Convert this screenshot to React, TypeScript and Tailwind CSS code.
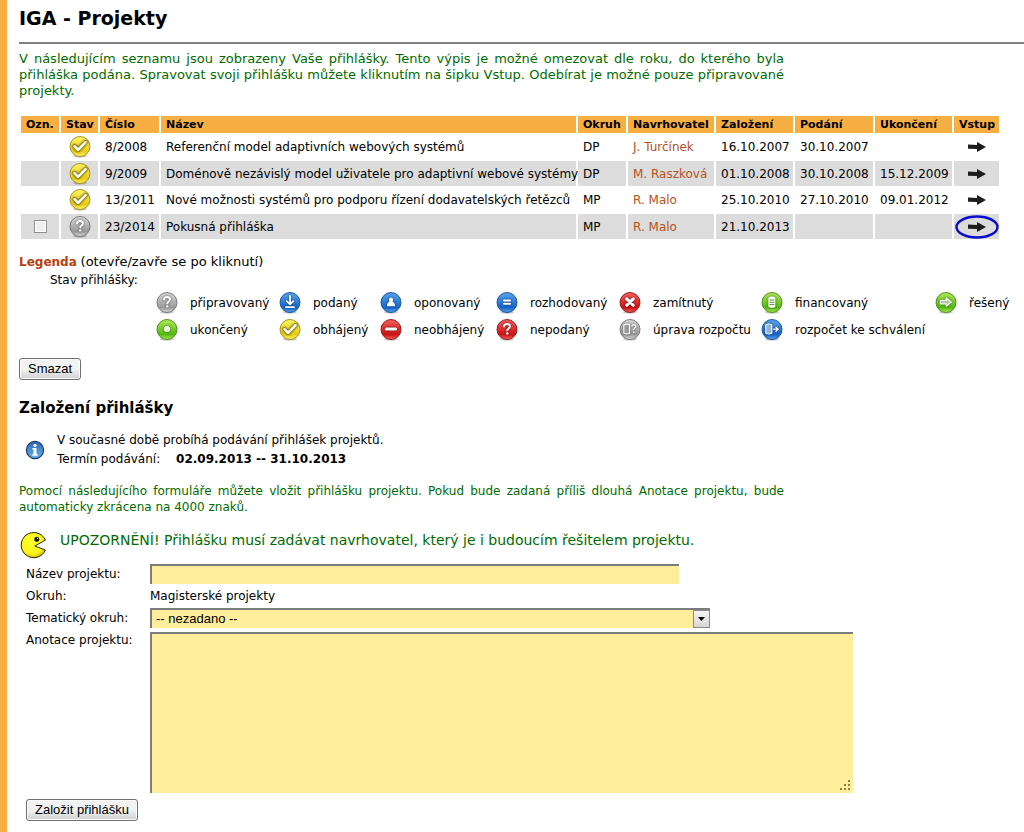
import { useId } from "react";
import type { ReactNode } from "react";

type Status =
  | "pripravovany"
  | "podany"
  | "oponovany"
  | "rozhodovany"
  | "zamitnuty"
  | "financovany"
  | "reseny"
  | "ukonceny"
  | "obhajeny"
  | "neobhajeny"
  | "nepodany"
  | "uprava"
  | "schvaleni";

type Tone = "gray" | "blue" | "red" | "green" | "yellow";

interface Project {
  number: string;
  title: string;
  status: Status;
  area: string;
  author: string;
  created: string;
  submitted?: string;
  finished?: string;
  selectable?: boolean;
}

const projects: Project[] = [
  {
    number: "8/2008",
    title: "Referenční model adaptivních webových systémů",
    status: "obhajeny",
    area: "DP",
    author: "J. Turčínek",
    created: "16.10.2007",
    submitted: "30.10.2007",
  },
  {
    number: "9/2009",
    title: "Doménově nezávislý model uživatele pro adaptivní webové systémy",
    status: "obhajeny",
    area: "DP",
    author: "M. Raszková",
    created: "01.10.2008",
    submitted: "30.10.2008",
    finished: "15.12.2009",
  },
  {
    number: "13/2011",
    title: "Nové možnosti systémů pro podporu řízení dodavatelských řetězců",
    status: "obhajeny",
    area: "MP",
    author: "R. Malo",
    created: "25.10.2010",
    submitted: "27.10.2010",
    finished: "09.01.2012",
  },
  {
    number: "23/2014",
    title: "Pokusná přihláška",
    status: "pripravovany",
    area: "MP",
    author: "R. Malo",
    created: "21.10.2013",
    selectable: true,
  },
];

const legend: { status: Status; label: string }[] = [
  { status: "pripravovany", label: "připravovaný" },
  { status: "podany", label: "podaný" },
  { status: "oponovany", label: "oponovaný" },
  { status: "rozhodovany", label: "rozhodovaný" },
  { status: "zamitnuty", label: "zamítnutý" },
  { status: "financovany", label: "financovaný" },
  { status: "reseny", label: "řešený" },
  { status: "ukonceny", label: "ukončený" },
  { status: "obhajeny", label: "obhájený" },
  { status: "neobhajeny", label: "neobhájený" },
  { status: "nepodany", label: "nepodaný" },
  { status: "uprava", label: "úprava rozpočtu" },
  { status: "schvaleni", label: "rozpočet ke schválení" },
];

const tones: Record<Tone, [string, string, string]> = {
  gray: ["#dadada", "#989898", "#6e6e6e"],
  blue: ["#5aa4ee", "#1565c8", "#124c94"],
  red: ["#f4605c", "#cc1214", "#8e0e10"],
  green: ["#aeea54", "#52b814", "#3f8a10"],
  yellow: ["#fdf566", "#e6cc14", "#a18a12"],
};

const question = (
  <>
    <path d="M9 8.6c0-1.7 1.4-2.6 3-2.6s3 .9 3 2.5c0 2-2.7 2-2.7 3.9" fill="none" strokeWidth="1.9" />
    <circle cx="12.3" cy="15.4" r="1.2" stroke="none" />
  </>
);

const glyphs: Record<Status, { tone: Tone; shape: ReactNode }> = {
  pripravovany: { tone: "gray", shape: question },
  nepodany: { tone: "red", shape: question },
  podany: {
    tone: "blue",
    shape: <path d="M12 5v8M8.8 10.2 12 13.4l3.2-3.2M8 16.2h8" fill="none" strokeWidth="1.8" />,
  },
  oponovany: {
    tone: "blue",
    shape: <path d="M12 6.4a2.3 2.3 0 0 1 1.4 4c1.8.7 2.6 2.4 2.6 4.8H8c0-2.4.8-4.1 2.6-4.8a2.3 2.3 0 0 1 1.4-4z" stroke="none" />,
  },
  rozhodovany: {
    tone: "blue",
    shape: <path d="M9 9.4h6M9 12.8h6" fill="none" strokeWidth="2" />,
  },
  zamitnuty: {
    tone: "red",
    shape: <path d="m8.8 7.9 6.4 6.4m0-6.4-6.4 6.4" fill="none" strokeWidth="3" />,
  },
  financovany: {
    tone: "green",
    shape: (
      <>
        <path d="M9 6.5c1.6-.9 4.4-.9 6 0v9.3c-1.6.9-4.4.9-6 0z" strokeWidth=".8" />
        <path d="M10 9h4M10 11.3h4M10 13.6h4" stroke="#4d9a18" strokeWidth="1" />
      </>
    ),
  },
  reseny: {
    tone: "green",
    shape: <path d="M6.4 9.4h5.8V7l5.2 4.1-5.2 4.1v-2.4H6.4z" fill="#ffffff99" strokeWidth="1.2" />,
  },
  ukonceny: {
    tone: "green",
    shape: <circle cx="12" cy="11" r="2.7" fill="#e4f6d0" strokeWidth="1" />,
  },
  obhajeny: {
    tone: "yellow",
    shape: (
      <>
        <path d="m6.5 11.2 3.5 3.6 7.6-7.6" fill="none" stroke="#9c8b1c" strokeWidth="4" />
        <path d="m6.5 11.2 3.5 3.6 7.6-7.6" fill="none" strokeWidth="2.4" />
      </>
    ),
  },
  neobhajeny: {
    tone: "red",
    shape: <path d="M7.4 11.1h9.2" fill="none" strokeWidth="3" />,
  },
  uprava: {
    tone: "gray",
    shape: (
      <>
        <path d="M5.8 6.8c1.6-.8 4.2-.8 5.8 0v8.4c-1.6.8-4.2.8-5.8 0z" fill="#9a9a9a" strokeWidth="1.1" />
        <path d="M14 8.2c0-2 3.6-2 3.6.2 0 1.6-1.8 1.4-1.8 3.2" fill="none" strokeWidth="1.3" />
        <circle cx="15.8" cy="14.2" r=".8" stroke="none" />
      </>
    ),
  },
  schvaleni: {
    tone: "blue",
    shape: (
      <>
        <path d="M5.8 6.8c1.6-.8 4.4-.8 6 0v8.4c-1.6.8-4.4.8-6 0z" fill="#8fb4d8" strokeWidth="1.1" />
        <path d="M13.6 11.2h4.4M16 9.2l2.2 2-2.2 2" fill="none" strokeWidth="1.3" />
      </>
    ),
  },
};

function StatusIcon({ status }: { status: Status }) {
  const id = useId();
  const { tone, shape } = glyphs[status];
  const [light, base, edge] = tones[tone];
  return (
    <svg viewBox="0 0 24 24" className="size-6 shrink-0" aria-hidden="true">
      <defs>
        <linearGradient id={id} x1="0" y1="0" x2="0" y2="1">
          <stop offset="0" stopColor={light} />
          <stop offset=".75" stopColor={base} />
          <stop offset="1" stopColor={light} />
        </linearGradient>
      </defs>
      <ellipse cx="12" cy="21.2" rx="7" ry="1.6" fill="#00000038" />
      <circle cx="12" cy="11.5" r="10" fill={`url(#${id})`} stroke={edge} strokeWidth=".9" />
      <g
        className="drop-shadow-[0_0_1px_#000000a0]"
        fill="#fff"
        stroke="#fff"
        strokeLinecap="round"
        strokeLinejoin="round"
      >
        {shape}
      </g>
    </svg>
  );
}

function InfoIcon() {
  return (
    <svg viewBox="0 0 20 20" className="size-5 shrink-0" aria-hidden="true">
      <defs>
        <linearGradient id="info-fill" x1="0" y1="0" x2="0" y2="1">
          <stop offset="0" stopColor="#2a62b4" />
          <stop offset="1" stopColor="#6ab8f2" />
        </linearGradient>
      </defs>
      <circle cx="10" cy="10" r="8.6" fill="url(#info-fill)" stroke="#1c3a66" strokeWidth="1.2" />
      <circle cx="10" cy="5.3" r="1.6" fill="#fff" />
      <path d="M7.4 8h4.1v6.2h1.2v1.5H7.3v-1.5h1.2V9.6H7.4z" fill="#fff" />
    </svg>
  );
}

function PacmanIcon() {
  return (
    <svg viewBox="0 0 28 28" className="size-7 shrink-0" aria-hidden="true">
      <defs>
        <radialGradient id="pacman-fill" cx=".45" cy=".4" r=".65">
          <stop offset="0" stopColor="#ffff30" />
          <stop offset=".7" stopColor="#fcf414" />
          <stop offset="1" stopColor="#c4b400" />
        </radialGradient>
      </defs>
      <path
        d="M25.4 9.2A12.6 12.6 0 1 0 25.4 19L14.8 15z"
        fill="url(#pacman-fill)"
        stroke="#2a2600"
        strokeWidth="1"
        strokeLinejoin="round"
      />
      <circle cx="16.8" cy="8.2" r="2.5" fill="#111" />
      <circle cx="17.6" cy="7.4" r=".7" fill="#fff" />
    </svg>
  );
}

function ArrowIcon() {
  return (
    <svg viewBox="0 0 18 12" className="h-3 w-[18px]" aria-hidden="true">
      <path d="M0 3.5 9 4V1l9 5-9 5V8L0 7.8z" fill="#1c1c1c" />
    </svg>
  );
}

function ProjectTable() {
  return (
    <table className="table-fixed w-[982px] border-separate border-spacing-[2px] text-left leading-4">
      <colgroup>
        <col className="w-[38px]" />
        <col className="w-[37px]" />
        <col className="w-[59px]" />
        <col />
        <col className="w-[48px]" />
        <col className="w-[86px]" />
        <col className="w-[77px]" />
        <col className="w-[78px]" />
        <col className="w-[77px]" />
        <col className="w-[45px]" />
      </colgroup>
      <thead>
        <tr className="h-[17px] bg-[#f7af44] text-[11px] whitespace-nowrap [&>th]:px-[5px] [&>th]:py-0">
          <th>Ozn.</th>
          <th>Stav</th>
          <th>Číslo</th>
          <th>Název</th>
          <th>Okruh</th>
          <th>Navrhovatel</th>
          <th>Založení</th>
          <th>Podání</th>
          <th>Ukončení</th>
          <th>Vstup</th>
        </tr>
      </thead>
      <tbody>
        {projects.map((p) => (
          <tr
            key={p.number}
            className="h-6 whitespace-nowrap even:h-[25px] even:bg-[#dcdcdc] [&>td]:px-[5px] [&>td]:py-0"
          >
            <td>
              {p.selectable && (
                <input
                  type="checkbox"
                  aria-label={p.number}
                  className="mx-auto block size-[13px] appearance-none border border-[#8e8f8f] bg-[#f0f0f0] shadow-[inset_0_0_0_1px_#fff]"
                />
              )}
            </td>
            <td>
              <div className="flex justify-center">
                <StatusIcon status={p.status} />
              </div>
            </td>
            <td>{p.number}</td>
            <td>{p.title}</td>
            <td>{p.area}</td>
            <td>
              <a href="#" className="text-[#b8501c]">
                {p.author}
              </a>
            </td>
            <td>{p.created}</td>
            <td>{p.submitted}</td>
            <td>{p.finished}</td>
            <td>
              <a href="#" aria-label="Vstup" className="relative flex justify-center">
                <ArrowIcon />
                {p.selectable && (
                  <svg viewBox="0 0 44 24" className="absolute -inset-x-1 -top-1.5 h-6 w-11" aria-hidden="true">
                    <ellipse cx="22" cy="12" rx="20.5" ry="10.5" fill="none" stroke="#0c0cd0" strokeWidth="2.4" />
                  </svg>
                )}
              </a>
            </td>
          </tr>
        ))}
      </tbody>
    </table>
  );
}

function Legend() {
  return (
    <section className="mt-[11px]">
      <p className="leading-5">
        <a href="#" className="font-bold text-[#b8400c]">
          Legenda
        </a>{" "}
        <span className="text-[13px]">(otevře/zavře se po kliknutí)</span>
      </p>
      <p className="pl-[31px] leading-4">Stav přihlášky:</p>
      <ul className="mt-[3px] ml-[136px] grid grid-cols-[123px_101px_116px_123px_142px_174px_80px] gap-y-[3px]">
        {legend.map((item) => (
          <li key={item.status} className="flex items-center gap-[11px] whitespace-nowrap">
            <StatusIcon status={item.status} />
            {item.label}
          </li>
        ))}
      </ul>
    </section>
  );
}

const buttonClass =
  "h-[22px] rounded-[3px] border border-[#707070] bg-linear-to-b from-[#f2f2f2] from-50% to-[#d0d0d0] px-2 font-['Liberation_Sans',Arial,sans-serif] text-[13px] leading-4 shadow-[inset_0_0_0_1px_#fcfcfc]";

const fieldClass =
  "block appearance-none border-t-2 border-l-2 border-[#7c7c7c] bg-[#feed9a] font-['Liberation_Sans',Arial,sans-serif] text-[13px] outline-none";

function ProjectForm() {
  return (
    <form onSubmit={(e) => e.preventDefault()}>
      <div className="ml-[7px] grid grid-cols-[124px_1fr] gap-y-1">
        <label htmlFor="nazev" className="leading-5">
          Název projektu:
        </label>
        <input id="nazev" type="text" className={`${fieldClass} h-5 w-[529px]`} />

        <span className="leading-4">Okruh:</span>
        <span className="leading-4">Magisterské projekty</span>

        <label htmlFor="tema" className="leading-5">
          Tematický okruh:
        </label>
        <div className="relative w-[560px]">
          <select id="tema" className={`${fieldClass} h-5 w-full pl-1`}>
            <option>-- nezadano --</option>
          </select>
          <span className="pointer-events-none absolute top-0.5 right-0 flex h-[18px] w-[17px] items-center justify-center border border-[#8a8a8a] bg-linear-to-b from-[#f4f4f4] to-[#d6d6d6]">
            <svg viewBox="0 0 7 4" className="h-1 w-[7px]" aria-hidden="true">
              <path d="M0 0h7L3.5 4z" />
            </svg>
          </span>
        </div>

        <label htmlFor="anotace" className="leading-4">
          Anotace projektu:
        </label>
        <div className="relative w-[703px]">
          <textarea id="anotace" className={`${fieldClass} h-[161px] w-full resize-none`} />
          <svg
            viewBox="0 0 11 11"
            className="pointer-events-none absolute right-0.5 bottom-0.5 size-[11px]"
            fill="#8a7f4a"
            aria-hidden="true"
          >
            <path d="M8 0h2v2H8zM4 4h2v2H4zM8 4h2v2H8zM0 8h2v2H0zM4 8h2v2H4zM8 8h2v2H8z" />
          </svg>
        </div>
      </div>
      <button type="submit" className={`${buttonClass} mt-1.5 ml-[7px]`}>
        Založit přihlášku
      </button>
    </form>
  );
}

export default function App() {
  return (
    <main className="min-h-screen border-l-[7px] border-[#f7af44] bg-white pl-3 font-['DejaVu_Sans',Verdana,sans-serif] text-xs text-black">
      <h1 className="pt-1.5 text-[19px] leading-6 font-bold">IGA - Projekty</h1>
      <hr className="mt-3 border-t-2 border-[#808080]" />

      <p className="mt-[7px] max-w-[765px] text-justify text-[13px] leading-4 text-[#006c00]">
        V následujícím seznamu jsou zobrazeny Vaše přihlášky. Tento výpis je možné omezovat dle roku, do kterého byla
        přihláška podána. Spravovat svoji přihlášku můžete kliknutím na šipku Vstup. Odebírat je možné pouze
        připravované projekty.
      </p>

      <div className="mt-[15px]">
        <ProjectTable />
      </div>
      <Legend />

      <button type="button" className={`${buttonClass} mt-4`}>
        Smazat
      </button>

      <h2 className="mt-4 text-[15px] leading-6 font-bold">Založení přihlášky</h2>

      <div className="mt-[11px] flex items-center gap-3 pl-1.5">
        <InfoIcon />
        <div className="leading-[19px]">
          <p>V současné době probíhá podávání přihlášek projektů.</p>
          <p>
            Termín podávání: <b className="ml-3">02.09.2013 -- 31.10.2013</b>
          </p>
        </div>
      </div>

      <p className="mt-3.5 max-w-[765px] text-justify leading-4 text-[#006c00]">
        Pomocí následujícího formuláře můžete vložit přihlášku projektu. Pokud bude zadaná příliš dlouhá Anotace
        projektu, bude automaticky zkrácena na 4000 znaků.
      </p>

      <div className="mt-4 mb-[5px] flex gap-3 pl-px text-sm leading-[18px] text-[#006c00]">
        <PacmanIcon />
        <p>UPOZORNĚNÍ! Přihlášku musí zadávat navrhovatel, který je i budoucím řešitelem projektu.</p>
      </div>

      <ProjectForm />
    </main>
  );
}
